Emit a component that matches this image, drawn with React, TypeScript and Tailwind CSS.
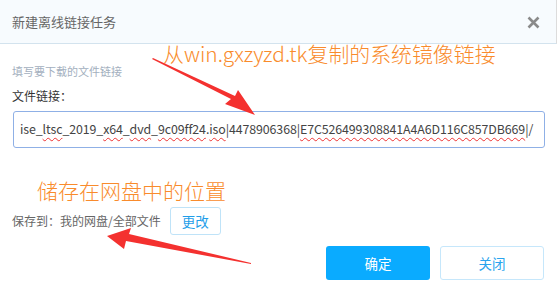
import React from "react";

const F = '"Microsoft YaHei", "Noto Sans CJK SC", "Noto Sans", sans-serif';

function W({ children }: { children: React.ReactNode }) {
  return (
    <span className="underline decoration-wavy decoration-[#e33] decoration-[1px] underline-offset-[3px]">
      {children}
    </span>
  );
}

export default function App() {
  return (
    <div
      className="relative w-[557px] h-[295px] bg-white overflow-hidden"
      style={{ fontFamily: F }}
    >
      {/* header */}
      <div className="h-[44px] bg-[#f7fbfe] border-b border-[#d3e3ee] border-r border-r-[#dcdcdc] flex items-center justify-between pl-[12px] pr-[16px]">
        <span className="text-[13px] text-[#666] leading-none">新建离线链接任务</span>
        <svg width="13" height="13" viewBox="0 0 13 13" className="mt-[1px]">
          <path d="M1.5 1.5 L11.5 11.5 M11.5 1.5 L1.5 11.5" stroke="#8a8a8a" strokeWidth="2.6" strokeLinecap="butt" />
        </svg>
      </div>

      {/* body */}
      <div className="px-[12px] pt-[19px]">
        <div className="text-[11px] leading-[16px] text-[#a3afbe]">填写要下载的文件链接</div>
        <div className="mt-[9px] text-[12px] leading-[16px] text-[#333]">文件链接：</div>
        <div className="mt-[7px] ml-[1px] w-[532px] h-[37px] border border-[#8fb0e6] rounded-[3px] flex items-center pl-[6px] overflow-hidden whitespace-nowrap text-[12.4px] text-[#444] tracking-[-0.1px]">
          <span>
            ise_<W>ltsc</W>_2019_<W>x64</W>_<W>dvd</W>_<W>9c09ff24</W>.<W>iso</W>|4478906368|<W>E7C526499308841A4A6D116C857DB669</W>|/
          </span>
        </div>

        <div className="mt-[59px] flex items-center">
          <span className="text-[12px] text-[#666] leading-none">保存到：我的网盘/全部文件</span>
          <button className="ml-[9px] w-[51px] h-[28px] border border-[#bfe3f8] rounded-[3px] bg-white text-[13.5px] text-[#1f9ee9] flex items-center justify-center">
            更改
          </button>
        </div>

        <div className="mt-[11px] flex justify-end gap-[10px] pr-[1px]">
          <button className="w-[104px] h-[34px] rounded-[3px] bg-[#0aabff] text-white text-[13.5px] flex items-center justify-center">
            确定
          </button>
          <button className="w-[104px] h-[34px] rounded-[3px] border border-[#c6e7fb] bg-white text-[#2aa4ee] text-[13.5px] flex items-center justify-center">
            关闭
          </button>
        </div>
      </div>

      {/* annotations overlay */}
      <div className="absolute left-[163px] top-[41px] text-[20.9px] leading-[24px] font-light text-[#f98b2c] whitespace-nowrap">
        从win.gxzyzd.tk复制的系统镜像链接
      </div>
      <div className="absolute left-[37px] top-[178px] text-[21px] leading-[24px] font-light text-[#f98b2c] whitespace-nowrap">
        储存在网盘中的位置
      </div>
      <svg className="absolute left-0 top-0 pointer-events-none" width="557" height="295" viewBox="0 0 557 295">
        <polygon
          points="152,59 231,99 225,104 255,115 238,90 235,96 153,58"
          fill="#f4312f"
        />
        <polygon
          points="251,263 129,234 131,228 107,236 124,249 126,241 251,264"
          fill="#f4312f"
        />
      </svg>
    </div>
  );
}
